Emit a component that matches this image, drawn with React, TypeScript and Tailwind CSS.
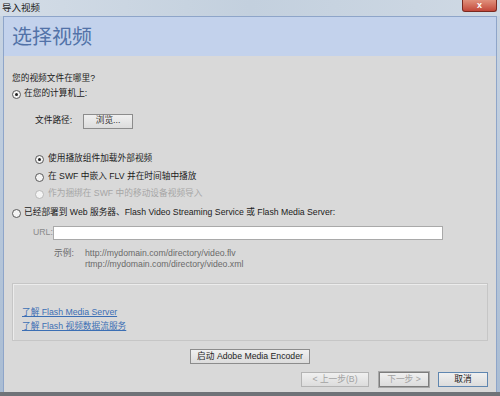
import React from "react";

const font = { fontFamily: '"Liberation Sans", "Noto Sans CJK SC", sans-serif' };

function Radio({ checked, disabled }: { checked?: boolean; disabled?: boolean }) {
  return (
    <span
      className={
        "flex h-[9px] w-[9px] shrink-0 items-center justify-center rounded-full border bg-[#f4f4f4] " +
        (disabled ? "border-[#b8b8b8]" : "border-[#5a5a5a]")
      }
    >
      {checked && <span className="h-[3px] w-[3px] rounded-full bg-[#202020]" />}
    </span>
  );
}

function Button({
  children,
  disabled,
  variant,
  className,
}: {
  children: React.ReactNode;
  disabled?: boolean;
  variant?: "default" | "focus";
  className?: string;
}) {
  let border = "border-[#8c8c8c]";
  if (disabled) border = "border-[#b4b4b4]";
  if (variant === "default") border = "border-[#7d7d7d] outline outline-1 outline-[#a8a8a8]";
  if (variant === "focus") border = "border-[#5f86b0]";
  return (
    <div
      className={
        "flex h-[15px] items-center justify-center border bg-gradient-to-b from-[#f0f0f0] to-[#dcdcdc] text-[8.7px] " +
        border +
        " " +
        (disabled ? "text-[#a2a2a2]" : "text-[#1e1e1e]") +
        " " +
        (className ?? "")
      }
    >
      {children}
    </div>
  );
}

export default function App() {
  return (
    <div
      className="flex h-[396px] w-[500px] flex-col overflow-hidden bg-gradient-to-b from-[#c9d5e3] to-[#a9bcd3] text-[8.7px] text-[#1b1b1b]"
      style={font}
    >
      {/* title bar */}
      <div className="flex h-[16px] shrink-0 items-start justify-between bg-gradient-to-r from-[#d3dce6] via-[#c3d0de] to-[#cfd9e4]">
        <span className="pl-[2px] pt-[2px] text-[9.5px] leading-[11px] text-[#202020]">导入视频</span>
        <div className="mr-[3px] flex h-[12px] w-[35px] items-center justify-center rounded-b-[3px] border border-t-0 border-[#7a2a20] bg-gradient-to-b from-[#e0907c] to-[#c2473a] text-[9px] font-bold leading-none text-white">
          x
        </div>
      </div>

      {/* dialog body */}
      <div className="mx-[3px] flex flex-1 flex-col border border-b-0 border-[#8ea5c9]">
        <div className="flex h-[39px] shrink-0 items-center bg-[#c3d2ec] pl-[8px]">
          <span className="text-[20px] leading-none text-[#5272a8]">选择视频</span>
        </div>

        <div className="flex flex-1 flex-col bg-[#d9d9d9] px-[8px]">
          <div className="mt-[16px] flex h-[14px] items-center">您的视频文件在哪里?</div>
          <div className="mt-[1px] flex h-[14px] items-center gap-[3px]">
            <Radio checked />
            <span>在您的计算机上:</span>
          </div>
          <div className="mt-[13px] flex h-[14px] items-center pl-[23px]">
            <span className="w-[48px]">文件路径:</span>
            <Button className="w-[50px] text-[#333]">浏览...</Button>
          </div>

          <div className="mt-[24px] flex h-[14px] items-center gap-[4px] pl-[23px]">
            <Radio checked />
            <span>使用播放组件加载外部视频</span>
          </div>
          <div className="mt-[4px] flex h-[14px] items-center gap-[4px] pl-[23px]">
            <Radio />
            <span>在 SWF 中嵌入 FLV 并在时间轴中播放</span>
          </div>
          <div className="mt-[3px] flex h-[14px] items-center gap-[4px] pl-[23px] text-[#a6a6a6]">
            <Radio disabled />
            <span>作为捆绑在 SWF 中的移动设备视频导入</span>
          </div>

          <div className="mt-[5px] flex h-[14px] items-center gap-[3px]">
            <Radio />
            <span>已经部署到 Web 服务器、Flash Video Streaming Service 或 Flash Media Server:</span>
          </div>
          <div className="mt-[6px] flex h-[14px] items-center pl-[21px]">
            <span className="w-[20px] text-[#8a8a8a]">URL:</span>
            <div className="h-[14px] w-[390px] border border-[#a9a9a9] bg-white" />
          </div>

          <div className="mt-[8px] flex pl-[42px] text-[#6a6a6a]">
            <span className="w-[31px] leading-[11px]">示例:</span>
            <div className="flex flex-col leading-[11px]">
              <span>http://mydomain.com/directory/video.flv</span>
              <span>rtmp://mydomain.com/directory/video.xml</span>
            </div>
          </div>

          <div className="mt-[13px] flex h-[58px] flex-col border border-[#c6c6c6] pl-[9px] pt-[21px] shadow-[inset_1px_1px_0_#ececec]">
            <span className="h-[14px] leading-[14px] text-[#3c6fb4] underline underline-offset-1">
              了解 Flash Media Server
            </span>
            <span className="h-[14px] leading-[14px] text-[#3c6fb4] underline underline-offset-1">
              了解 Flash 视频数据流服务
            </span>
          </div>

          <div className="mt-[8px] flex justify-center">
            <Button className="w-[120px] border-[#7a7a7a]">启动 Adobe Media Encoder</Button>
          </div>

          <div className="mt-[8px] flex justify-end">
            <Button disabled className="w-[68px]">
              &lt; 上一步(B)
            </Button>
            <Button disabled variant="default" className="ml-[10px] w-[50px] text-[#a2a2a2]">
              下一步 &gt;
            </Button>
            <Button variant="focus" className="ml-[9px] w-[50px]">
              取消
            </Button>
          </div>
        </div>
      </div>
      <div className="h-[4px] shrink-0 bg-[#6f7378]" />
    </div>
  );
}
